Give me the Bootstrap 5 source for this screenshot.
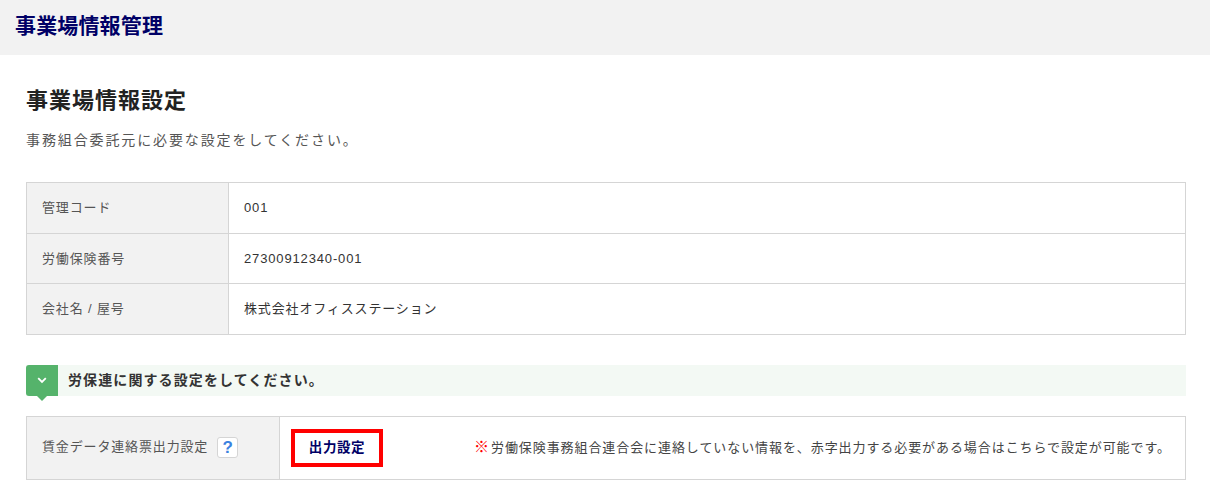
<!DOCTYPE html>
<html lang="ja">
<head>
<meta charset="utf-8">
<title>事業場情報管理</title>
<link href="https://cdn.jsdelivr.net/npm/bootstrap@5.3.0/dist/css/bootstrap.min.css" rel="stylesheet">
<style>
html,body{height:490px;overflow:hidden}
body{background:#fff;color:#333;font-family:"Liberation Sans","Noto Sans CJK JP",sans-serif;font-size:13px}
.top-head{height:55px;background:#f2f2f2;padding-left:15px}
.top-title{font-size:21px;font-weight:700;color:#000066;margin:0;line-height:52px;letter-spacing:.15px}
.main-area{padding:0 24px 0 26px}
.sec-title{font-size:22px;font-weight:700;color:#222;margin:0;padding-top:32px;line-height:28px;letter-spacing:1px}
.sec-lead{font-size:14px;color:#555;margin:0;padding-top:15px;line-height:20px;letter-spacing:1.88px}
.info-tbl{margin:32px 0 0;width:100%;border-collapse:collapse;table-layout:fixed}
.info-tbl th,.info-tbl td{border:1px solid #d5d5d5;font-weight:400;padding:0 15px;vertical-align:middle;letter-spacing:.85px}
.info-tbl tr{height:50.6px}
.info-tbl th{background:#f2f2f2;color:#555;width:202px}
.info-tbl td{color:#333}
.guide-bar{margin-top:30px;height:31px;background:#f3f9f4;font-size:14px;font-weight:700;color:#333;letter-spacing:1.1px}
.guide-tab{width:32px;height:31px;background:#55b36b;border-radius:3px 0 0 3px;position:relative;margin-right:10px}
.guide-tab::after{content:"";position:absolute;left:11px;top:31px;border:5px solid transparent;border-top-color:#55b36b;border-bottom:0}
.out-tbl{margin-top:20px}
.out-tbl.info-tbl tr{height:63px}
.out-tbl.info-tbl th{width:253px;padding-right:0}
.out-tbl.info-tbl td{padding:0 14px 0 11px}
.help-mark{display:inline-flex;align-items:center;justify-content:center;width:21px;height:21px;margin-left:9px;background:#fff;border:1px solid #d5d5d5;border-radius:3px;color:#3b82e0;font-size:17px;font-weight:700;letter-spacing:0;vertical-align:middle}
.out-btn{width:92px;height:38px;border:4px solid #f00;border-radius:0;background:#fff;color:#000066;font-weight:700;font-size:13.5px;padding:0;letter-spacing:.6px}
.out-note{font-size:13px;color:#444;letter-spacing:.92px}
.red-mark{color:#f00;font-weight:700;font-size:15px;line-height:1;margin-right:2px;letter-spacing:0}
</style>
</head>
<body>
<header class="top-head"><h1 class="top-title">事業場情報管理</h1></header>
<main class="main-area">
<h2 class="sec-title">事業場情報設定</h2>
<p class="sec-lead">事務組合委託元に必要な設定をしてください。</p>
<table class="info-tbl">
<tr><th>管理コード</th><td>001</td></tr>
<tr><th>労働保険番号</th><td>27300912340-001</td></tr>
<tr><th>会社名 / 屋号</th><td>株式会社オフィスステーション</td></tr>
</table>
<div class="guide-bar d-flex align-items-center">
<div class="guide-tab d-flex align-items-center justify-content-center">
<svg width="10" height="7" viewBox="0 0 10 7" aria-hidden="true"><path d="M1.2 1.2 5 5 8.8 1.2" fill="none" stroke="#fff" stroke-width="1.8"/></svg>
</div>
労保連に関する設定をしてください。
</div>
<table class="info-tbl out-tbl">
<tr>
<th>賃金データ連絡票出力設定<span class="help-mark">?</span></th>
<td>
<div class="d-flex align-items-center justify-content-between">
<button type="button" class="btn out-btn">出力設定</button>
<span class="out-note"><span class="red-mark">※</span>労働保険事務組合連合会に連絡していない情報を、赤字出力する必要がある場合はこちらで設定が可能です。</span>
</div>
</td>
</tr>
</table>
</main>
</body>
</html>
